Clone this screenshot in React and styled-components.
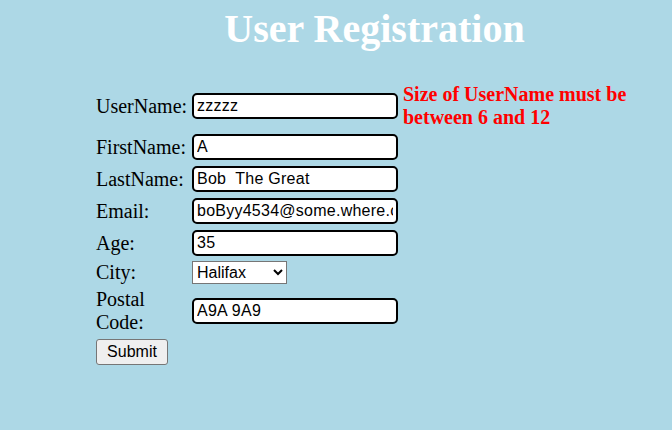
import styled, { createGlobalStyle } from 'styled-components';

const GlobalStyle = createGlobalStyle`
  html,
  body {
    margin: 0;
    background: #add8e6;
  }

  body {
    font-family: 'Liberation Serif', 'Times New Roman', serif;
    color: #000;
  }
`;

const Page = styled.div`
  min-height: 430px;
  padding-top: 6px;
  box-sizing: border-box;
`;

const Title = styled.h1`
  margin: 0;
  padding-left: 77px;
  text-align: center;
  font-family: 'Liberation Serif', 'Times New Roman', serif;
  font-size: 40px;
  line-height: 46px;
  font-weight: 700;
  color: #fff;
`;

const Form = styled.form`
  display: flex;
  flex-direction: column;
  gap: 4px;
  margin: 31px 0 0 96px;
`;

const Row = styled.div`
  display: flex;
  align-items: center;
  gap: 5px;
  min-height: ${({ $height }) => $height}px;
`;

const Label = styled.label`
  width: 91px;
  flex: none;
  font-size: 20px;
  line-height: 23px;
`;

const TextInput = styled.input`
  width: 206px;
  height: 26px;
  box-sizing: border-box;
  padding: 1px 3px;
  border: 2px solid #000;
  border-radius: 5px;
  background: #fff;
  font-family: 'Liberation Sans', Arial, sans-serif;
  font-size: 16px;
  letter-spacing: 0.25px;
  color: #000;
  outline: none;
`;

const CitySelect = styled.select`
  width: 95px;
  height: 23px;
  box-sizing: border-box;
  border: 1px solid #767676;
  background: #fff;
  font-family: 'Liberation Sans', Arial, sans-serif;
  font-size: 16px;
  color: #000;
`;

const ErrorText = styled.span`
  width: 230px;
  flex: none;
  font-size: 20px;
  line-height: 23px;
  font-weight: 700;
  color: #ff0000;
`;

const SubmitButton = styled.button`
  width: 72px;
  height: 26px;
  margin-top: 1px;
  box-sizing: border-box;
  padding: 1px 6px;
  border: 1px solid #767676;
  border-radius: 3px;
  background: #efefef;
  font-family: 'Liberation Sans', Arial, sans-serif;
  font-size: 16px;
  color: #000;
`;

const fields = [
  { id: 'firstName', label: 'FirstName:', value: 'A' },
  { id: 'lastName', label: 'LastName:', value: 'Bob  The Great' },
  { id: 'email', label: 'Email:', value: 'boByy4534@some.where.com' },
  { id: 'age', label: 'Age:', value: '35' },
];

const cities = ['Halifax', 'Toronto', 'Montreal', 'Vancouver'];

const App = () => {
  return (
    <>
      <GlobalStyle />
      <Page>
        <Title>User Registration</Title>
        <Form onSubmit={(e) => e.preventDefault()}>
          <Row $height={46}>
            <Label htmlFor="userName">UserName:</Label>
            <TextInput id="userName" defaultValue="zzzzz" />
            <ErrorText>Size of UserName must be between 6 and 12</ErrorText>
          </Row>
          {fields.map((f) => (
            <Row key={f.id} $height={28}>
              <Label htmlFor={f.id}>{f.label}</Label>
              <TextInput id={f.id} defaultValue={f.value} />
            </Row>
          ))}
          <Row $height={23}>
            <Label htmlFor="city">City:</Label>
            <CitySelect id="city" defaultValue="Halifax">
              {cities.map((c) => (
                <option key={c}>{c}</option>
              ))}
            </CitySelect>
          </Row>
          <Row $height={46}>
            <Label htmlFor="postalCode">Postal Code:</Label>
            <TextInput id="postalCode" defaultValue="A9A 9A9" />
          </Row>
          <Row $height={26}>
            <SubmitButton type="submit">Submit</SubmitButton>
          </Row>
        </Form>
      </Page>
    </>
  );
};

export default App;
